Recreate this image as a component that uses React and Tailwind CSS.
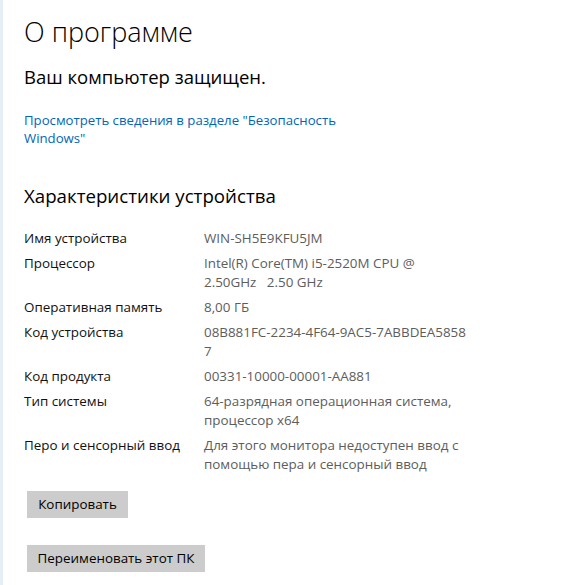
import React from "react";

const specs = [
  { label: "Имя устройства", value: ["WIN-SH5E9KFU5JM"] },
  { label: "Процессор", value: ["Intel(R) Core(TM) i5-2520M CPU @", "2.50GHz   2.50 GHz"] },
  { label: "Оперативная память", value: ["8,00 ГБ"] },
  { label: "Код устройства", value: ["08B881FC-2234-4F64-9AC5-7ABBDEA5858", "7"] },
  { label: "Код продукта", value: ["00331-10000-00001-AA881"] },
  { label: "Тип системы", value: ["64-разрядная операционная система,", "процессор x64"] },
  { label: "Перо и сенсорный ввод", value: ["Для этого монитора недоступен ввод с", "помощью пера и сенсорный ввод"] },
];

function SpecRow({ label, value }) {
  return (
    <div className="flex text-[13.4px] leading-[19px]">
      <div className="w-[180px] shrink-0 text-[#111]">{label}</div>
      <div className="text-[#5d5d5d]">
        {value.map((line, i) => (
          <div key={i} className="whitespace-pre">{line}</div>
        ))}
      </div>
    </div>
  );
}

export default function App() {
  return (
    <div
      className="flex min-h-[585px] w-[588px] bg-white"
      style={{ fontFamily: '"Open Sans", "Noto Sans", sans-serif' }}
    >
      <div className="w-[3px] shrink-0 bg-[#e6edf4]" />
      <div className="flex flex-col pl-[21px] pt-[14px]">
        <h1 className="text-[27px] font-light leading-[36px] text-black">О программе</h1>
        <div className="mt-[13px] text-[18.5px] leading-[28px] text-black">Ваш компьютер защищен.</div>
        <a href="#" className="mt-[20px] text-[13.2px] leading-[18px] text-[#0067b8]">
          Просмотреть сведения в разделе "Безопасность
          <br />
          Windows"
        </a>
        <h2 className="mt-[35px] text-[18.7px] leading-[28px] text-black">Характеристики устройства</h2>
        <div className="mt-[19px] flex flex-col gap-[6px]">
          {specs.map((s) => (
            <SpecRow key={s.label} label={s.label} value={s.value} />
          ))}
        </div>
        <div className="mt-[17px] flex flex-col items-start gap-[27px] pl-[3px]">
          <button className="h-[27px] w-[101px] bg-[#cccccc] text-[13.4px] text-black">Копировать</button>
          <button className="h-[27px] w-[178px] bg-[#cccccc] text-[13.4px] text-black">Переименовать этот ПК</button>
        </div>
      </div>
    </div>
  );
}
